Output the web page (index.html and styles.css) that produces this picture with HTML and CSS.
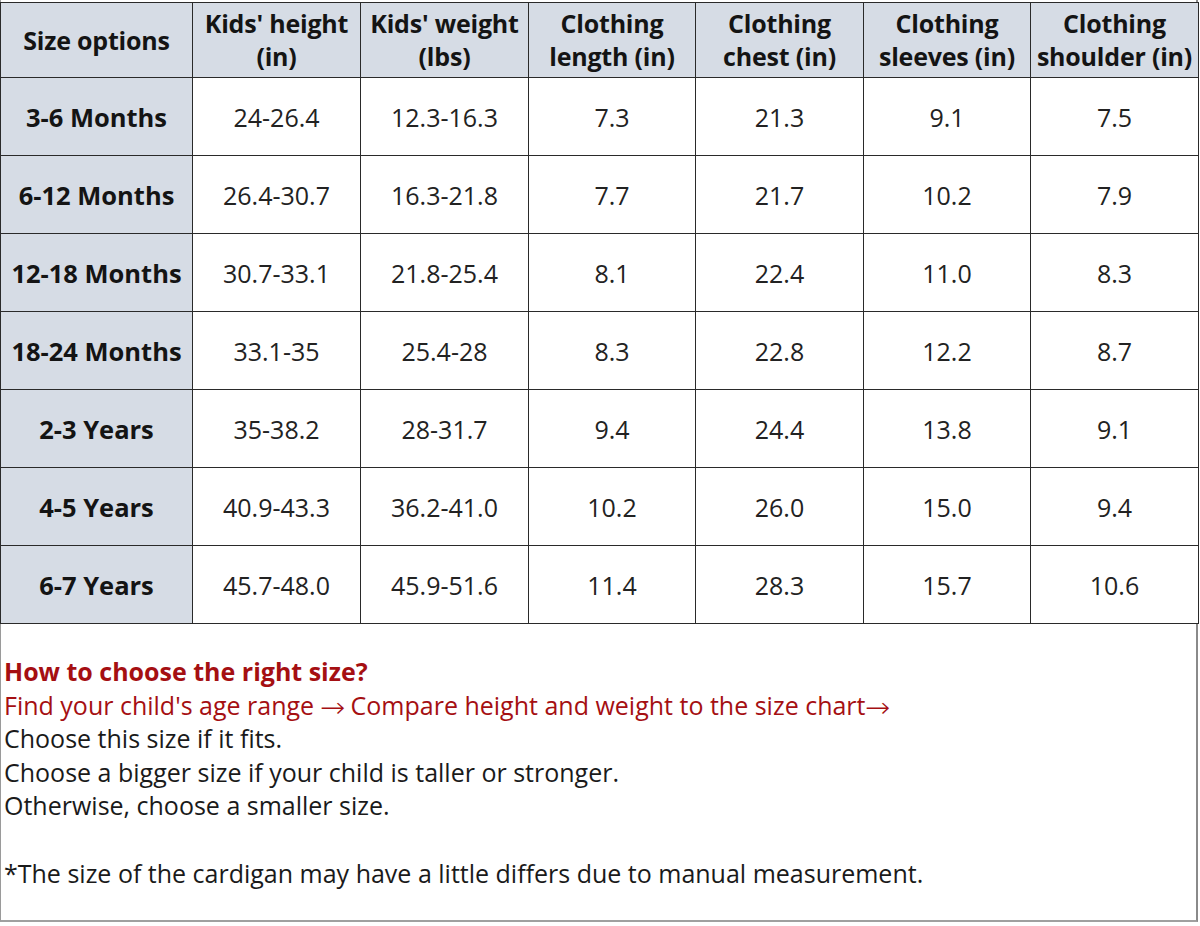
FILE: index.html
```html
<!DOCTYPE html>
<html>
<head>
<meta charset="utf-8">
<link rel="stylesheet" href="styles.css">
</head>
<body>
<div class="frame">
  <table class="chart">
    <colgroup>
      <col class="c0"><col class="c1"><col class="c2"><col class="c3"><col class="c4"><col class="c5"><col class="c6">
    </colgroup>
    <thead>
      <tr>
        <th>Size options</th>
        <th>Kids' height<br>(in)</th>
        <th>Kids' weight<br>(lbs)</th>
        <th>Clothing<br>length (in)</th>
        <th>Clothing<br>chest (in)</th>
        <th>Clothing<br>sleeves (in)</th>
        <th>Clothing<br>shoulder (in)</th>
      </tr>
    </thead>
    <tbody>
      <tr><th>3-6 Months</th><td>24-26.4</td><td>12.3-16.3</td><td>7.3</td><td>21.3</td><td>9.1</td><td>7.5</td></tr>
      <tr><th>6-12 Months</th><td>26.4-30.7</td><td>16.3-21.8</td><td>7.7</td><td>21.7</td><td>10.2</td><td>7.9</td></tr>
      <tr><th>12-18 Months</th><td>30.7-33.1</td><td>21.8-25.4</td><td>8.1</td><td>22.4</td><td>11.0</td><td>8.3</td></tr>
      <tr><th>18-24 Months</th><td>33.1-35</td><td>25.4-28</td><td>8.3</td><td>22.8</td><td>12.2</td><td>8.7</td></tr>
      <tr><th>2-3 Years</th><td>35-38.2</td><td>28-31.7</td><td>9.4</td><td>24.4</td><td>13.8</td><td>9.1</td></tr>
      <tr><th>4-5 Years</th><td>40.9-43.3</td><td>36.2-41.0</td><td>10.2</td><td>26.0</td><td>15.0</td><td>9.4</td></tr>
      <tr><th>6-7 Years</th><td>45.7-48.0</td><td>45.9-51.6</td><td>11.4</td><td>28.3</td><td>15.7</td><td>10.6</td></tr>
    </tbody>
  </table>
  <div class="notes">
    <p class="title">How to choose the right size?</p>
    <p class="red">Find your child's age range <span class="arrow">→</span> Compare height and weight to the size chart<span class="arrow">→</span></p>
    <p>Choose this size if it fits.</p>
    <p>Choose a bigger size if your child is taller or stronger.</p>
    <p>Otherwise, choose a smaller size.</p>
    <p class="gap">*The size of the cardigan may have a little differs due to manual measurement.</p>
  </div>
</div>
</body>
</html>
```
FILE: styles.css
```css
html, body {
  margin: 0;
  padding: 0;
  background: #ffffff;
}
body {
  font-family: "Open Sans", "Noto Sans", sans-serif;
  color: #1a1a1a;
}
.frame {
  width: 1198px;
  height: 922px;
  border-left: 1px solid #9a9a9a;
  border-right: 2px solid #8a8a8a;
  border-bottom: 2px solid #a0a0a0;
  box-sizing: border-box;
  padding-top: 2px;
}
.chart {
  border-collapse: collapse;
  table-layout: fixed;
  width: 1198px;
  margin-left: -1px;
}
.c0 { width: 192px; }
.c1 { width: 168px; }
.c2 { width: 168px; }
.c3 { width: 167px; }
.c4 { width: 168px; }
.c5 { width: 167px; }
.c6 { width: 168px; }
.chart th, .chart td {
  border: 1px solid #2a2a2a;
  text-align: center;
  vertical-align: middle;
  padding: 0;
}
.chart thead th {
  background: #d6dce5;
  height: 74px;
  font-size: 25px;
  font-weight: 700;
  line-height: 33px;
  color: #141414;
  white-space: nowrap;
  letter-spacing: -0.2px;
}
.chart tbody th {
  background: #d6dce5;
  font-size: 25.5px;
  font-weight: 700;
  color: #141414;
  white-space: nowrap;
}
.chart tbody tr {
  height: 78px;
}
.chart tbody td {
  font-size: 25px;
  font-weight: 400;
  color: #222;
  background: #ffffff;
}
.notes {
  padding: 31px 0 0 3px;
  font-size: 25px;
  line-height: 33.5px;
}
.notes p {
  margin: 0;
  color: #1a1a1a;
}
.notes .title {
  color: #a50f12;
  font-weight: 700;
}
.notes .red {
  color: #a50f12;
}
.notes .arrow {
  font-family: "DejaVu Sans", sans-serif;
  font-size: 28px;
  font-weight: 300;
  line-height: 1;
  vertical-align: -2px;
  display: inline-block;
  transform: scaleX(1.08);
}
.notes .gap {
  margin-top: 34px;
}
```
